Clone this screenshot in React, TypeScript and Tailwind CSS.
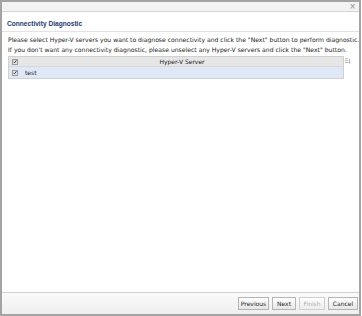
import React from 'react';

const font = { fontFamily: 'Tahoma, "DejaVu Sans", "Liberation Sans", sans-serif' };

function Check() {
  return (
    <span className="flex h-[6px] w-[6px] items-center justify-center border border-[#9a9a9a] bg-[#e2e2e2]">
      <svg viewBox="0 0 8 8" className="h-[5px] w-[5px]">
        <path d="M1 4.5 L3 6.5 L7 1.5" fill="none" stroke="#333" strokeWidth="1.8" />
      </svg>
    </span>
  );
}

export default function App() {
  return (
    <div className="h-[316px] w-[362px] bg-white" style={font}>
      <div className="flex h-full w-[361px] flex-col border-2 border-[#a3a3a3] bg-white">
        {/* top bar */}
        <div className="flex h-[10px] items-center justify-end border-b border-[#d4d4d4] bg-[#f3f3f3] pr-[3px]">
          <span className="text-[8px] leading-none text-[#8c8c8c]">×</span>
        </div>

        {/* title */}
        <div className="flex h-[20px] items-center border-b border-[#e2e2e2] px-[5px] pt-[5px]">
          <span
            className="text-[6.6px] font-bold text-[#1e3a6e]"
            style={{ fontFamily: '"Liberation Sans", Arial, sans-serif' }}
          >
            Connectivity Diagnostic
          </span>
        </div>

        {/* body */}
        <div className="flex-1 px-[6px] pt-[3px]">
          <p className="whitespace-nowrap text-[6.1px] leading-[10px] text-[#1a1a1a]">
            Please select Hyper-V servers you want to diagnose connectivity and click the "Next" button to perform diagnostic.
          </p>
          <p className="whitespace-nowrap text-[6.1px] leading-[10px] text-[#1a1a1a]">
            If you don't want any connectivity diagnostic, please unselect any Hyper-V servers and click the "Next" button.
          </p>
          <div className="mt-[1px] flex items-start">
            <div className="w-[336px] border border-[#d0d0d0]">
              <div className="flex h-[10px] items-center border-b border-[#d8d8d8] bg-[#e6e6e6]">
                <div className="flex w-[12px] justify-center"><Check /></div>
                <div className="flex-1 text-center text-[6px] text-[#222]">Hyper-V Server</div>
              </div>
              <div className="flex h-[11px] items-center bg-[#dfe8f6]">
                <div className="flex w-[12px] justify-center"><Check /></div>
                <div className="pl-[4px] text-[6px] text-[#222]">test</div>
              </div>
            </div>
            <svg viewBox="0 0 8 8" className="ml-[1px] mt-[2px] h-[6px] w-[6px]">
              <path d="M0 1h4M0 3.5h4M0 6h4M6 1v6M4.8 5.5L6 7L7.2 5.5" fill="none" stroke="#999" strokeWidth="0.9" />
            </svg>
          </div>
        </div>

        {/* footer */}
        <div className="flex h-[22px] items-center justify-end gap-[3px] border-t border-[#d0d0d0] bg-gradient-to-b from-[#fafafa] to-[#efefef] pr-[1px]">
          <button className="h-[13px] w-[31px] border border-[#b5b5b5] bg-gradient-to-b from-[#ffffff] to-[#e6e6e6] text-[6px] text-[#222]">Previous</button>
          <button className="h-[13px] w-[24px] border border-[#b5b5b5] bg-gradient-to-b from-[#ffffff] to-[#e6e6e6] text-[6px] text-[#222]">Next</button>
          <button className="h-[13px] w-[26px] border border-[#cfcfcf] bg-gradient-to-b from-[#ffffff] to-[#eeeeee] text-[6px] text-[#aaa]">Finish</button>
          <button className="h-[13px] w-[30px] border border-[#b5b5b5] bg-gradient-to-b from-[#ffffff] to-[#e6e6e6] text-[6px] text-[#222]">Cancel</button>
        </div>
      </div>
    </div>
  );
}
